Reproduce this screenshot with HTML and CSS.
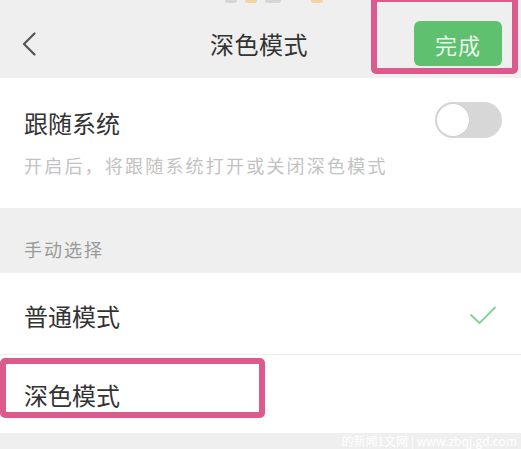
FILE: index.html
```html
<!DOCTYPE html>
<html lang="zh-CN">
<head>
<meta charset="utf-8">
<title>深色模式</title>
<link rel="stylesheet" href="styles.css">
</head>
<body>
<div class="page">
  <header class="nav">
    <div class="peek">
      <span class="p p-grey"></span>
      <span class="p p-orange"></span>
      <span class="p p-grey p-wide"></span>
      <span class="p p-orange p-gap"></span>
    </div>
    <div class="bar">
      <div class="bar-left">
        <svg class="back" width="14" height="24" viewBox="0 0 14 24"><polyline points="12.5,1.5 2,12 12.5,22.5" fill="none" stroke="#555" stroke-width="2.2" stroke-linecap="round" stroke-linejoin="round"/></svg>
      </div>
      <div class="bar-title">深色模式</div>
      <div class="bar-right">
        <button class="done">完成</button>
        <div class="mark mark-top"></div>
      </div>
    </div>
  </header>

  <section class="follow">
    <div class="follow-row">
      <div class="follow-title">跟随系统</div>
      <div class="toggle"><span class="knob"></span></div>
    </div>
    <div class="follow-desc">开启后，将跟随系统打开或关闭深色模式</div>
  </section>

  <div class="group-head">手动选择</div>

  <div class="option option-first">
    <span class="option-label">普通模式</span>
    <svg class="check" width="28" height="20" viewBox="0 0 28 20"><polyline points="2,10 10.5,18 26,2.5" fill="none" stroke="#86cf98" stroke-width="1.8" stroke-linecap="round" stroke-linejoin="round"/></svg>
  </div>
  <div class="option option-second">
    <span class="option-label">深色模式</span>
    <div class="mark mark-row"></div>
  </div>

  <footer class="foot">
    <span class="watermark">的新闻1文网 | www.zbqj.gd.com</span>
  </footer>
</div>
</body>
</html>
```

FILE: styles.css
```css
* { box-sizing: border-box; }
html, body { margin: 0; padding: 0; }
body {
  width: 521px;
  height: 449px;
  overflow: hidden;
  background: #ffffff;
  font-family: "Noto Sans CJK SC", "Noto Sans", sans-serif;
  color: #333333;
}
.page { display: flex; flex-direction: column; }

.nav {
  background: #efefef;
  height: 78px;
  display: flex;
  flex-direction: column;
}
.peek {
  height: 5px;
  display: flex;
  padding-left: 225px;
  gap: 8px;
}
.p { height: 3px; width: 12px; border-radius: 0 0 5px 5px; }
.p-grey { background: #d6d6d6; }
.p-orange { background: #f5d3a0; }
.p-wide { width: 16px; }
.p-gap { margin-left: 22px; }

.bar {
  margin-top: 16px;
  height: 46px;
  display: grid;
  grid-template-columns: 1fr auto 1fr;
  align-items: center;
}
.bar-left { padding-left: 22px; display: flex; align-items: center; }
.back { display: block; }
.bar-title {
  font-size: 24px;
  line-height: 30px;
  color: #333;
  letter-spacing: 0.5px;
  margin-left: -3px;
}
.bar-right {
  display: flex;
  justify-content: flex-end;
  padding-right: 19px;
  position: relative;
  height: 46px;
}
.done {
  width: 88px;
  height: 45px;
  border: none;
  border-radius: 6px;
  background: #5fc06f;
  color: #e9f6ea;
  font-family: "Noto Sans CJK SC", sans-serif;
  font-size: 22px;
  padding: 0;
  letter-spacing: 1px;
}

.mark {
  position: absolute;
  border: 6px solid #dc5a8c;
  border-radius: 5px;
}
.mark-top {
  right: 3px;
  top: -25px;
  width: 147px;
  height: 78px;
}

.follow {
  padding: 24px 19px 31px 24px;
}
.follow-row {
  display: flex;
  justify-content: space-between;
  align-items: flex-start;
}
.follow-title {
  font-size: 24px;
  line-height: 36px;
  padding-top: 3px;
  color: #333;
}
.toggle {
  width: 67px;
  height: 36px;
  border-radius: 18px;
  background: #d7d7d7;
  padding: 2px;
  display: flex;
}
.knob {
  width: 32px;
  height: 32px;
  border-radius: 50%;
  background: #ffffff;
  box-shadow: 0 0 0 1px #d0d0d0;
}
.follow-desc {
  margin-top: 12px;
  font-size: 18px;
  line-height: 24px;
  letter-spacing: 2.2px;
  color: #c2c2c2;
}

.group-head {
  background: #efefef;
  padding: 29px 24px 12px;
  font-size: 18px;
  line-height: 24px;
  letter-spacing: 2px;
  color: #9a9a9a;
}

.option {
  display: flex;
  align-items: center;
  justify-content: space-between;
  padding-left: 24px;
  padding-right: 24px;
  position: relative;
}
.option-label {
  font-size: 24px;
  line-height: 30px;
  color: #333;
}
.option-first {
  padding-top: 28px;
  padding-bottom: 23px;
  border-bottom: 1px solid #ededed;
}
.check { display: block; margin-top: -3px; }
.option-second {
  padding-top: 25px;
  padding-bottom: 23px;
}
.mark-row {
  left: 0;
  top: 3px;
  width: 265px;
  height: 60px;
}

.foot {
  background: #efefef;
  height: 16px;
  display: flex;
  justify-content: flex-end;
  align-items: center;
  padding-right: 4px;
}
.watermark {
  font-size: 12px;
  line-height: 14px;
  color: #ffffff;
  font-family: "Noto Sans CJK SC", sans-serif;
}
```
